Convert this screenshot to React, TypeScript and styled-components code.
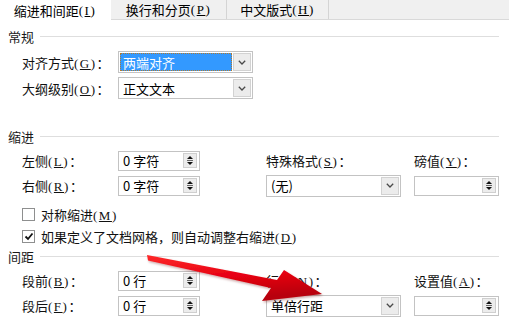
import React from 'react';
import styled, { createGlobalStyle } from 'styled-components';

const GlobalStyle = createGlobalStyle`
  body {
    margin: 0;
    background: #fff;
    font-family: "Noto Sans CJK SC", "Noto Sans", sans-serif;
    font-size: 13px;
    color: #000;
  }
`;

const Page = styled.div`
  position: relative;
  width: 509px;
  height: 325px;
  overflow: hidden;
  background: #fff;
`;

const TabBar = styled.div`
  display: flex;
  height: 19px;
  background: #f0f0f0;
  border-bottom: 1px solid #d9d9d9;
`;

const Tab = styled.div<{ $active?: boolean; $w: number }>`
  width: ${({ $w }) => $w}px;
  display: flex;
  align-items: center;
  justify-content: center;
  line-height: 19px;
  white-space: nowrap;
  background: ${({ $active }) => ($active ? '#fff' : '#f0f0f0')};
  border-right: 1px solid ${({ $active }) => ($active ? '#fff' : '#d4d4d4')};
  ${({ $active }) => ($active ? 'height: 20px;' : '')}
`;

const Content = styled.div`
  padding: 0 10px 0 8px;
`;

const SectionHead = styled.div<{ $mt: number }>`
  display: flex;
  align-items: center;
  height: 17px;
  margin-top: ${({ $mt }) => $mt}px;
  color: #1a1a1a;
`;

const HeadLine = styled.div`
  flex: 1;
  height: 1px;
  margin-left: 6px;
  background: #dedede;
`;

const Rows = styled.div<{ $mt: number; $gap: number }>`
  display: flex;
  flex-direction: column;
  gap: ${({ $gap }) => $gap}px;
  margin-top: ${({ $mt }) => $mt}px;
  padding-left: 14px;
`;

const Row = styled.div`
  display: flex;
  align-items: center;
`;

const FieldGrid = styled.div<{ $mt: number }>`
  display: grid;
  grid-template-columns: 96px 148px 148px 85px;
  grid-auto-rows: 21px;
  row-gap: 4px;
  align-items: center;
  margin-top: ${({ $mt }) => $mt}px;
  padding-left: 14px;
`;

const Label = styled.span<{ $w?: number }>`
  ${({ $w }) => ($w ? `width: ${$w}px;` : '')}
  white-space: nowrap;
  color: #111;
`;

const AccParen = styled.span`
  font-family: "Liberation Serif", serif;
  letter-spacing: 1.5px;
  font-size: 13px;
`;

const AccKey = styled.span`
  text-decoration: underline;
  text-underline-offset: 1px;
`;

const Select = styled.div<{ $w: number }>`
  width: ${({ $w }) => $w}px;
  height: 22px;
  box-sizing: border-box;
  border: 1px solid #c3c3c3;
  background: #fff;
  display: flex;
  align-items: stretch;
`;

const SelectText = styled.div<{ $selected?: boolean }>`
  flex: 1;
  display: flex;
  align-items: center;
  padding-left: 3px;
  margin: 1px 0 1px 1px;
  white-space: nowrap;
  ${({ $selected }) =>
    $selected
      ? `
    background: #3399ff;
    color: #fff;
    outline: 1px dotted #b07a30;
    outline-offset: -1px;
  `
      : ''}
`;

const DropBtn = styled.div`
  width: 18px;
  margin: 1px;
  box-sizing: border-box;
  border: 1px solid #d2d2d2;
  background: #ececec;
  display: flex;
  align-items: center;
  justify-content: center;
`;

const SpinBox = styled.div<{ $w: number }>`
  width: ${({ $w }) => $w}px;
  height: 20px;
  box-sizing: border-box;
  border: 1px solid #c3c3c3;
  background: #fff;
  display: flex;
  align-items: center;
  justify-content: space-between;
  padding: 0 2px 0 4px;
  white-space: nowrap;
`;

const SpinBtn = styled.div`
  width: 14px;
  height: 15px;
  box-sizing: border-box;
  border: 1px solid #cfcfcf;
  background: #ececec;
  display: flex;
  align-items: center;
  justify-content: center;
`;

const CheckRow = styled.div`
  display: flex;
  align-items: center;
  height: 18px;
  gap: 6px;
`;

const Box = styled.div`
  width: 13px;
  height: 13px;
  box-sizing: border-box;
  border: 1px solid #8e8f8f;
  background: #fff;
  display: flex;
  align-items: center;
  justify-content: center;
`;

const Overlay = styled.svg`
  position: absolute;
  left: 0;
  top: 0;
  pointer-events: none;
`;

function Acc({ k }: { k: string }) {
  return (
    <AccParen>
      (<AccKey>{k}</AccKey>)
    </AccParen>
  );
}

function Chevron() {
  return (
    <svg width="8" height="5" viewBox="0 0 8 5">
      <polyline points="0.8,0.8 4,4 7.2,0.8" fill="none" stroke="#4a4a4a" strokeWidth="1.3" />
    </svg>
  );
}

function SpinArrows() {
  return (
    <svg width="8" height="11" viewBox="0 0 8 11">
      <polygon points="4,1 7,4 1,4" fill="#111" />
      <line x1="1" y1="5.5" x2="7" y2="5.5" stroke="#666" strokeWidth="1" />
      <polygon points="1,7 7,7 4,10" fill="#111" />
    </svg>
  );
}

function Dropdown({ w, text, selected }: { w: number; text: string; selected?: boolean }) {
  return (
    <Select $w={w}>
      <SelectText $selected={selected}>{text}</SelectText>
      <DropBtn>
        <Chevron />
      </DropBtn>
    </Select>
  );
}

function Spinner({ w, text }: { w: number; text?: string }) {
  return (
    <SpinBox $w={w}>
      <span>{text}</span>
      <SpinBtn>
        <SpinArrows />
      </SpinBtn>
    </SpinBox>
  );
}

function Check({ checked }: { checked?: boolean }) {
  return (
    <Box>
      {checked && (
        <svg width="10" height="9" viewBox="0 0 10 9">
          <polyline points="1.5,4.5 4,7 8.5,1.5" fill="none" stroke="#111" strokeWidth="1.8" />
        </svg>
      )}
    </Box>
  );
}

function Section({ title, mt }: { title: string; mt: number }) {
  return (
    <SectionHead $mt={mt}>
      <span>{title}</span>
      <HeadLine />
    </SectionHead>
  );
}

export default function App() {
  return (
    <Page>
      <GlobalStyle />
      <TabBar>
        <Tab $active $w={110}>
          缩进和间距<Acc k="I" />
        </Tab>
        <Tab $w={115}>
          换行和分页<Acc k="P" />
        </Tab>
        <Tab $w={101}>
          中文版式<Acc k="H" />
        </Tab>
      </TabBar>
      <Content>
        <Section title="常规" mt={8} />
        <Rows $mt={6} $gap={4}>
          <Row>
            <Label $w={96}>
              对齐方式<Acc k="G" />：
            </Label>
            <Dropdown w={135} text="两端对齐" selected />
          </Row>
          <Row>
            <Label $w={96}>
              大纲级别<Acc k="O" />：
            </Label>
            <Dropdown w={135} text="正文文本" />
          </Row>
        </Rows>

        <Section title="缩进" mt={29} />
        <FieldGrid $mt={5}>
          <Label>
            左侧<Acc k="L" />：
          </Label>
          <Spinner w={82} text="0 字符" />
          <Label>
            特殊格式<Acc k="S" />：
          </Label>
          <Label>
            磅值<Acc k="Y" />：
          </Label>
          <Label>
            右侧<Acc k="R" />：
          </Label>
          <Spinner w={82} text="0 字符" />
          <Dropdown w={135} text="(无)" />
          <Spinner w={85} />
        </FieldGrid>

        <Rows $mt={9} $gap={4}>
          <CheckRow>
            <Check />
            <Label>
              对称缩进<Acc k="M" />
            </Label>
          </CheckRow>
          <CheckRow>
            <Check checked />
            <Label>
              如果定义了文档网格，则自动调整右缩进<Acc k="D" />
            </Label>
          </CheckRow>
        </Rows>

        <Section title="间距" mt={3} />
        <FieldGrid $mt={5}>
          <Label>
            段前<Acc k="B" />：
          </Label>
          <Spinner w={82} text="0 行" />
          <Label>
            行距<Acc k="N" />：
          </Label>
          <Label>
            设置值<Acc k="A" />：
          </Label>
          <Label>
            段后<Acc k="F" />：
          </Label>
          <Spinner w={82} text="0 行" />
          <Dropdown w={135} text="单倍行距" />
          <Spinner w={85} />
        </FieldGrid>
      </Content>

      <Overlay width="509" height="325" viewBox="0 0 509 325">
        <defs>
          <linearGradient id="red" x1="0" y1="0" x2="0.25" y2="1">
            <stop offset="0" stopColor="#ff2a2a" />
            <stop offset="0.55" stopColor="#e60012" />
            <stop offset="1" stopColor="#b8000a" />
          </linearGradient>
          <filter id="sh" x="-10%" y="-30%" width="130%" height="160%">
            <feDropShadow dx="1" dy="1.5" stdDeviation="1.2" floodColor="#600" floodOpacity="0.35" />
          </filter>
        </defs>
        <polygon
          points="147,255 277,280 284,270 322,294 262,301 271,288 148,260.5"
          fill="url(#red)"
          filter="url(#sh)"
        />
      </Overlay>
    </Page>
  );
}
